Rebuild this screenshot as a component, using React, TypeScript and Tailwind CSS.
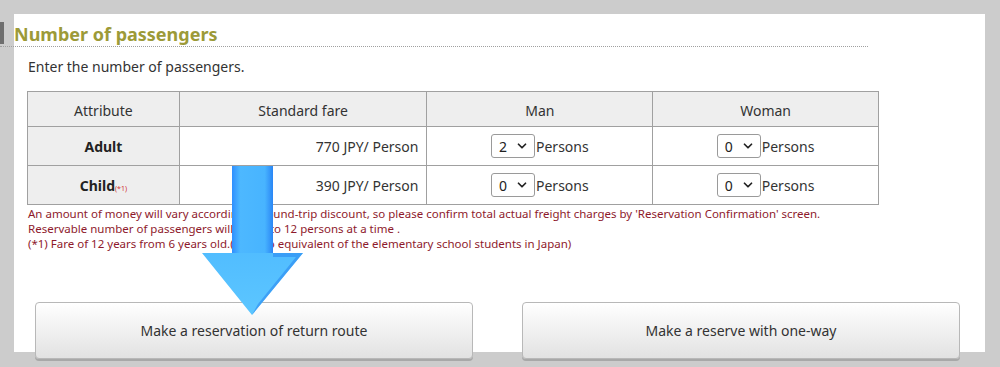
import { ChevronDown } from "lucide-react"

const rows = [
  { label: "Adult", fare: "770 JPY/ Person", man: "2", woman: "0", note: false },
  { label: "Child", fare: "390 JPY/ Person", man: "0", woman: "0", note: true },
]

function CountSelect({ value }: { value: string }) {
  return (
    <div className="flex h-[24px] w-[44px] items-center justify-between rounded-[3px] border border-[#9a9a9a] bg-white pl-[7px] pr-[5px] text-[14px] text-[#222]">
      <span>{value}</span>
      <ChevronDown className="h-[14px] w-[14px]" strokeWidth={3} />
    </div>
  )
}

function Arrow() {
  return (
    <svg className="pointer-events-none absolute left-[188px] top-[152px]" width="104" height="152" viewBox="0 0 104 152">
      <defs>
        <linearGradient id="shaft" x1="0" y1="0" x2="1" y2="0">
          <stop offset="0" stopColor="#2f8fff" />
          <stop offset="0.2" stopColor="#4db8ff" />
          <stop offset="0.8" stopColor="#48b4ff" />
          <stop offset="1" stopColor="#2a86f5" />
        </linearGradient>
        <linearGradient id="head" x1="0" y1="0" x2="0" y2="1">
          <stop offset="0" stopColor="#42b0ff" />
          <stop offset="1" stopColor="#5cc6ff" />
        </linearGradient>
      </defs>
      <path d="M30 0 H71 V87 H101 L50 149 L0 87 H30 Z" fill="url(#head)" />
      <path d="M30 0 H71 V87 H30 Z" fill="url(#shaft)" />
      <path d="M71 87 H101 L50 149 L56 138 L94 91 H71 Z" fill="#2b88f0" opacity="0.6" />
    </svg>
  )
}

export default function App() {
  return (
    <div
      className="h-[367px] w-[1000px] overflow-hidden bg-[#cccccc] pl-[14px] pt-[14px]"
      style={{ fontFamily: '"Noto Sans", "Open Sans", Arial, sans-serif' }}
    >
      <div className="relative h-[338px] w-[971px] bg-white">
        <div className="ml-[-14px] flex w-[868px] items-stretch border-b border-dotted border-[#a0a0a0] pt-[8px]">
          <div className="mb-[2px] w-[4px] bg-[#6e6e6e]" />
          <h2 className="ml-[10px] text-[18px] font-bold leading-[24px] text-[#9c9a38]">Number of passengers</h2>
        </div>

        <p className="ml-[14px] mt-[11px] text-[14px] leading-[18px] text-[#333]">Enter the number of passengers.</p>

        <table className="ml-[13px] mt-[15px] w-[852px] border-collapse border border-[#a0a0a0] text-[14px] text-[#333]">
          <thead>
            <tr className="h-[35px] bg-[#eeeeee]">
              <th className="w-[152px] border border-[#a0a0a0] pt-[2px] font-normal">Attribute</th>
              <th className="w-[248px] border border-[#a0a0a0] pt-[2px] font-normal">Standard fare</th>
              <th className="w-[226px] border border-[#a0a0a0] pt-[2px] font-normal">Man</th>
              <th className="w-[226px] border border-[#a0a0a0] pt-[2px] font-normal">Woman</th>
            </tr>
          </thead>
          <tbody>
            {rows.map((row) => (
              <tr key={row.label} className="h-[39px]">
                <td className="border border-[#a0a0a0] bg-[#eeeeee] text-center text-[14px] font-bold text-[#222]">
                  {row.label}
                  {row.note ? <span className="text-[7px] font-normal text-[#d03030]">(*1)</span> : null}
                </td>
                <td className="border border-[#a0a0a0] pr-[8px] text-right">{row.fare}</td>
                <td className="border border-[#a0a0a0]">
                  <div className="flex items-center justify-center gap-[1px]">
                    <CountSelect value={row.man} />
                    <span>Persons</span>
                  </div>
                </td>
                <td className="border border-[#a0a0a0]">
                  <div className="flex items-center justify-center gap-[1px]">
                    <CountSelect value={row.woman} />
                    <span>Persons</span>
                  </div>
                </td>
              </tr>
            ))}
          </tbody>
        </table>

        <div className="ml-[14px] mt-[1px] text-[11.5px] leading-[15px] text-[#8e1a2c]">
          <p>An amount of money will vary according to round-trip discount, so please confirm total actual freight charges by 'Reservation Confirmation' screen.</p>
          <p>Reservable number of passengers will be up to 12 persons at a time .</p>
          <p>(*1) Fare of 12 years from 6 years old.(Age : to equivalent of the elementary school students in Japan)</p>
        </div>

        <div className="ml-[21px] mt-[51px] flex gap-[49px]">
          <button className="h-[57px] w-[438px] rounded-[4px] border border-[#b8b8b8] bg-gradient-to-b from-white to-[#e2e2e2] text-[14px] text-[#333] shadow-[0_2px_0_#a8a8a8]">
            Make a reservation of return route
          </button>
          <button className="h-[57px] w-[438px] rounded-[4px] border border-[#b8b8b8] bg-gradient-to-b from-white to-[#e2e2e2] text-[14px] text-[#333] shadow-[0_2px_0_#a8a8a8]">
            Make a reserve with one-way
          </button>
        </div>

        <Arrow />
      </div>
    </div>
  )
}
